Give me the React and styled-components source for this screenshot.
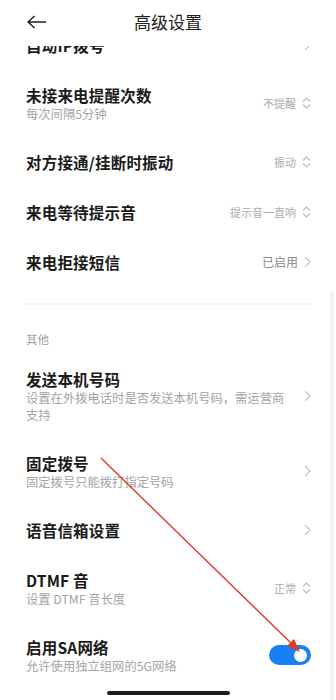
import React from 'react'
import styled, { createGlobalStyle } from 'styled-components'

const Global = createGlobalStyle`
  html, body {
    margin: 0;
    padding: 0;
    background: #fff;
  }
  body {
    font-family: "Noto Sans CJK SC", "Noto Sans", sans-serif;
    -webkit-font-smoothing: antialiased;
  }
`

const Page = styled.div`
  position: relative;
  width: 336px;
  height: 700px;
  overflow: hidden;
  background: #fff;
`

const Header = styled.div`
  position: relative;
  z-index: 2;
  height: 46px;
  display: flex;
  align-items: center;
  justify-content: center;
  background: #fff;

  h1 {
    margin: 0;
    font-size: 17px;
    font-weight: 400;
    color: #222;
    line-height: 1;
    padding-bottom: 4px;
  }
`

const Back = styled.div`
  position: absolute;
  left: 27px;
  top: 15px;
  width: 20px;
  height: 14px;
  display: flex;
`

const Clipped = styled.div`
  height: 23.5px;
  overflow: hidden;
  display: flex;
  flex-direction: column;
  justify-content: flex-end;
`

const Row = styled.div`
  display: flex;
  align-items: center;
  padding: 14px 25px 14px 26px;
  min-height: 22px;
`

const Texts = styled.div`
  flex: 1;
  display: flex;
  flex-direction: column;
`

const Title = styled.div`
  font-size: 15.5px;
  line-height: 22px;
  font-weight: 600;
  color: #1a1a1a;
  letter-spacing: 0.2px;
`

const Sub = styled.div`
  font-size: 12.3px;
  line-height: 17px;
  color: #a4a4a4;
  padding-right: 14px;
`

const Value = styled.div`
  display: flex;
  align-items: center;
  gap: 6px;
  font-size: ${p => (p.$dark ? '12px' : '11px')};
  color: ${p => (p.$dark ? '#8a8a8a' : '#ababab')};
  white-space: nowrap;
`

const Divider = styled.div`
  margin: 16px 24px 0 25px;
  height: 2px;
  background: #f3f3f3;
`

const SectionLabel = styled.div`
  padding: 25px 26px 6px;
  font-size: 11.5px;
  line-height: 18px;
  color: #a0a0a0;
`

const Toggle = styled.div`
  width: 42px;
  height: 20px;
  border-radius: 10px;
  background: #1681f7;
  display: flex;
  align-items: center;
  justify-content: flex-end;
  padding: 0 4px;
  box-sizing: border-box;

  &::after {
    content: '';
    width: 13px;
    height: 13px;
    border-radius: 50%;
    background: #fff;
  }
`

const Scrollbar = styled.div`
  position: absolute;
  right: 2px;
  top: 292px;
  width: 4px;
  bottom: 0;
  background: #f2f2f2;
`

const HomeBar = styled.div`
  position: absolute;
  left: 107px;
  bottom: 5px;
  width: 123px;
  height: 4px;
  border-radius: 2px;
  background: #1e1e1e;
`

const Overlay = styled.svg`
  position: absolute;
  left: 0;
  top: 0;
  width: 336px;
  height: 700px;
  pointer-events: none;
  z-index: 3;
`

const UpDown = () => (
  <svg width="9" height="12" viewBox="0 0 9 12">
    <path d="M1 4.5 L4.5 1 L8 4.5 M1 7.5 L4.5 11 L8 7.5" fill="none" stroke="#bdbdbd" strokeWidth="1.2" />
  </svg>
)

const Chevron = () => (
  <svg width="7" height="12" viewBox="0 0 7 12">
    <path d="M1 1 L6 6 L1 11" fill="none" stroke="#c4c4c4" strokeWidth="1.2" />
  </svg>
)

const Item = ({ title, sub, value, icon, dark, toggle }) => (
  <Row>
    <Texts>
      <Title>{title}</Title>
      {sub && <Sub>{sub}</Sub>}
    </Texts>
    {toggle ? (
      <Toggle />
    ) : (
      <Value $dark={dark}>
        {value && <span>{value}</span>}
        {icon === 'updown' ? <UpDown /> : <Chevron />}
      </Value>
    )}
  </Row>
)

export default function App() {
  return (
    <Page>
      <Global />
      <Header>
        <Back>
          <svg width="20" height="14" viewBox="0 0 20 14">
            <path d="M1 7 H19 M7.5 1 L1 7 L7.5 13" fill="none" stroke="#222" strokeWidth="1.5" />
          </svg>
        </Back>
        <h1>高级设置</h1>
      </Header>

      <Clipped>
        <Item title="自动IP拨号" icon="chevron" />
      </Clipped>
      <Item title="未接来电提醒次数" sub="每次间隔5分钟" value="不提醒" icon="updown" />
      <Item title="对方接通/挂断时振动" value="振动" icon="updown" />
      <Item title="来电等待提示音" value="提示音一直响" icon="updown" />
      <Item title="来电拒接短信" value="已启用" icon="chevron" dark />

      <Divider />
      <SectionLabel>其他</SectionLabel>

      <Item title="发送本机号码" sub="设置在外拨电话时是否发送本机号码，需运营商支持" icon="chevron" />
      <Item title="固定拨号" sub="固定拨号只能拨打指定号码" icon="chevron" />
      <Item title="语音信箱设置" icon="chevron" />
      <Item title="DTMF 音" sub="设置 DTMF 音长度" value="正常" icon="updown" />
      <Item title="启用SA网络" sub="允许使用独立组网的5G网络" toggle />

      <Scrollbar />
      <HomeBar />

      <Overlay viewBox="0 0 336 700">
        <line x1="101" y1="458" x2="294" y2="646" stroke="#e2382d" strokeWidth="1.4" />
        <polygon points="300,652 287,646 294,639" fill="#e2382d" />
      </Overlay>
    </Page>
  )
}
